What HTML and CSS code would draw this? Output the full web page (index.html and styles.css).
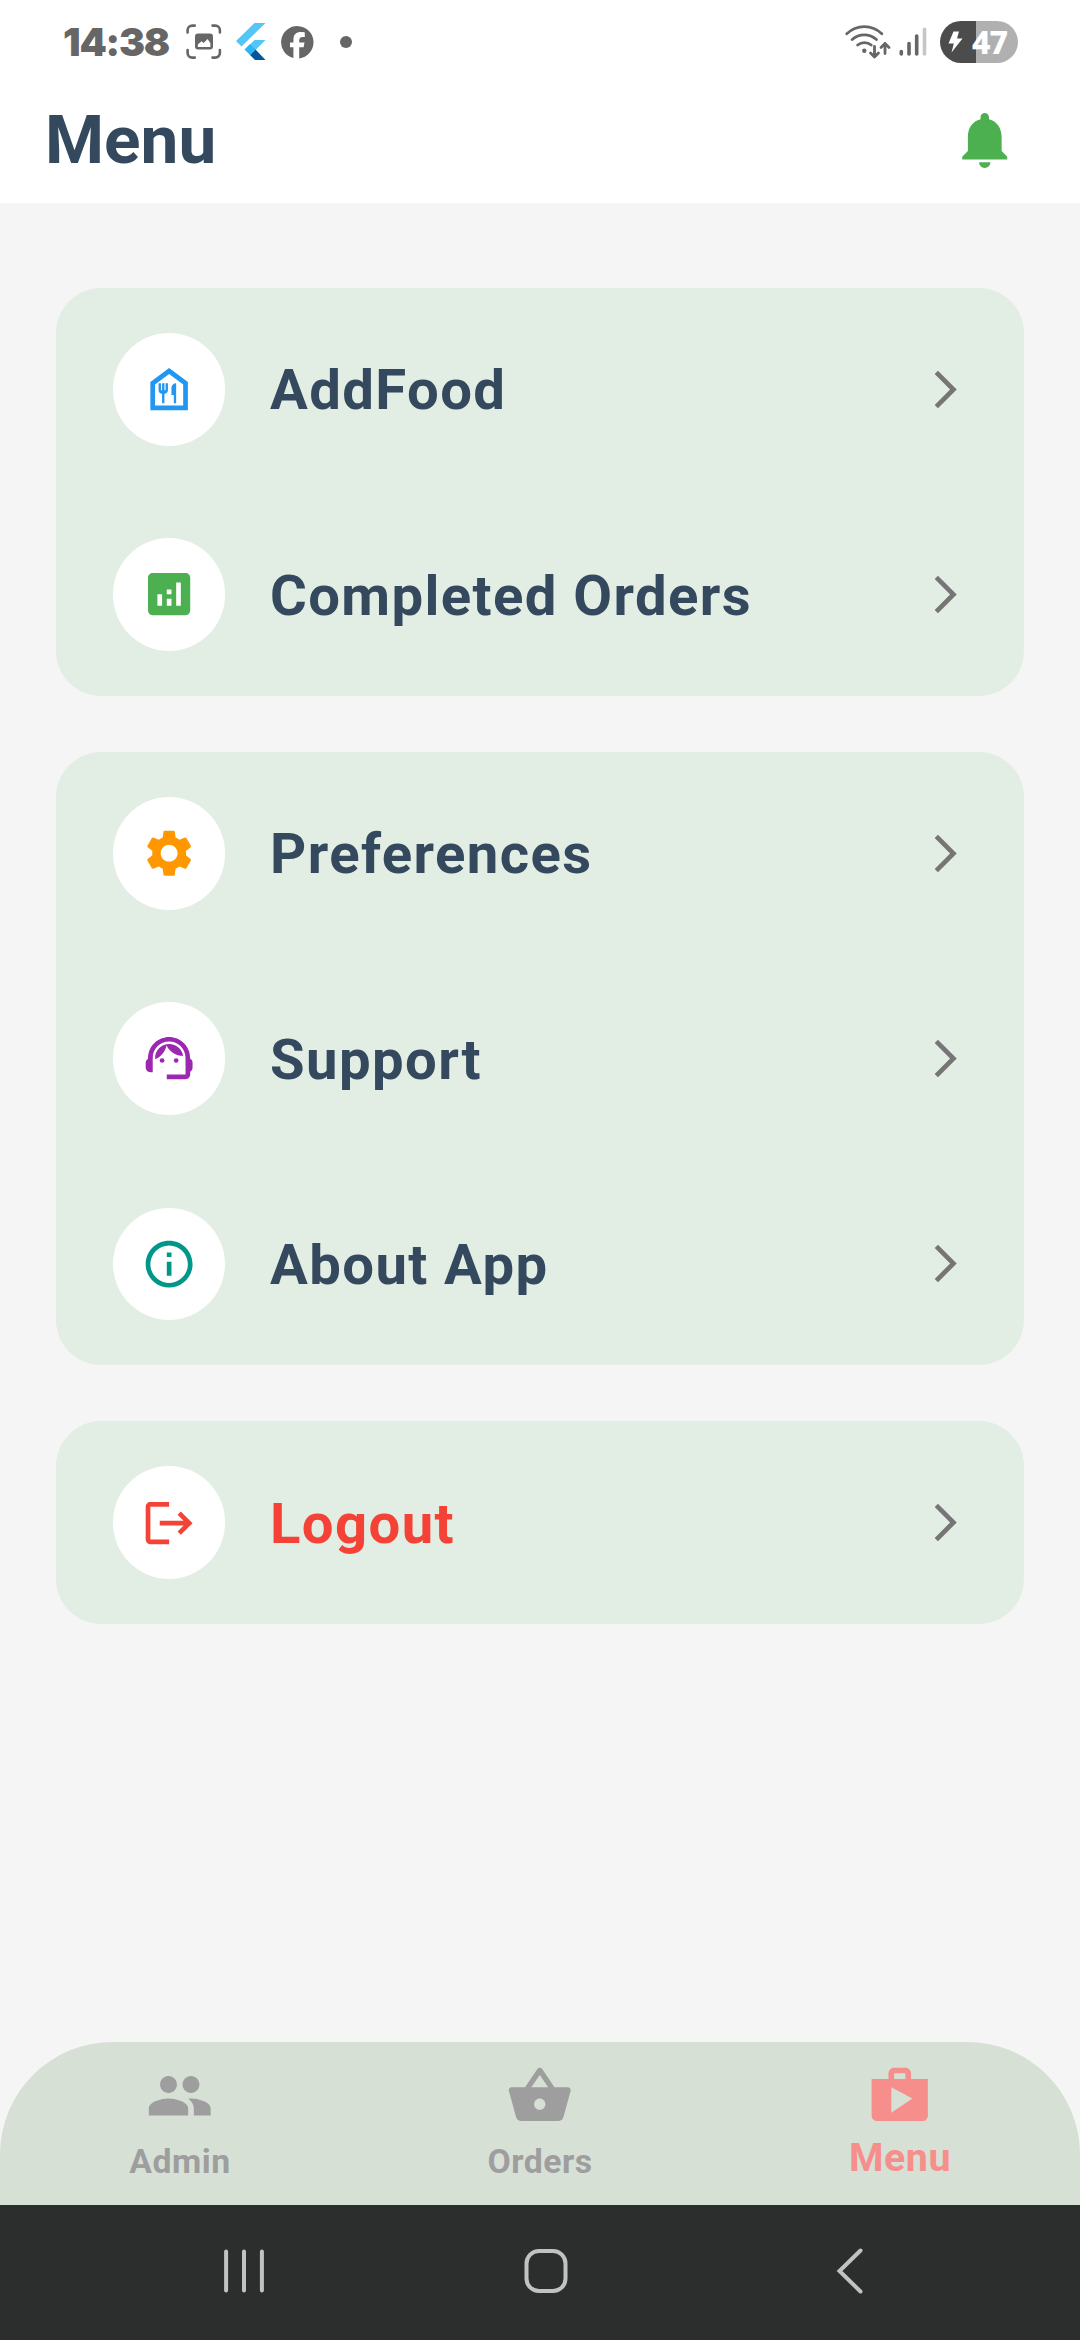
FILE: index.html
```html
<!DOCTYPE html>
<html lang="en">
<head>
<meta charset="utf-8">
<title>Menu</title>
<link rel="stylesheet" href="styles.css">
</head>
<body>
<svg class="defs" width="0" height="0" aria-hidden="true">
  <symbol id="chevron" viewBox="0 0 24 24"><path d="M6.23 20.23L8 22l10-10L8 2 6.23 3.77 14.46 12z"/></symbol>
</svg>
<div class="screen">
  <div class="status">
    <span class="time">14:38</span>
    <svg class="st-shot" width="36" height="36" viewBox="0 0 36 36" fill="none" stroke="#666" stroke-width="2.6" stroke-linecap="round">
      <path d="M1.6 8.5V6.2a4.6 4.6 0 0 1 4.6-4.6h2.6M26.5 1.6h2.8a4.6 4.6 0 0 1 4.6 4.6v2.3M33.900 26v3a4.600 4.600 0 0 1-4.600 4.600h-2.800M8.800 33.600H6.200A4.600 4.600 0 0 1 1.600 29v-3"/>
      <path fill="#666" stroke="none" fill-rule="evenodd" d="M12 9.500h12a3 3 0 0 1 3 3v10a3 3 0 0 1-3 3H12a3 3 0 0 1-3-3v-10a3 3 0 0 1 3-3zM11.800 23h12.600v-3.800l-2.800-4.200-4 4-2.100-1.800-3.700 3.300z"/>
    </svg>
    <svg class="st-flutter" width="30" height="38" viewBox="0 0 30 38">
      <path fill="#54c5f8" d="M18.500 0H29.500L5.500 23.500 0 18zM18.500 17H29.500L19.500 27 14 21.500z"/>
      <path fill="#29b6f6" d="M8.500 26.500l5.500-5.500 5.500 5.500-5.500 5.500z"/>
      <path fill="#01579b" d="M14 32l5.500-5.500 10 10.500H19z"/>
    </svg>
    <svg class="st-fb" width="33" height="33" viewBox="0 0 33 33">
      <path fill="#666" d="M32.500 16.300A16.200 16.200 0 1 0 12.400 32V21.300H9v-4.900h3.400v-2.200c0-5.500 2.500-8.100 7.900-8.100 1 0 2.800.2 3.500.4V11c-.4 0-1-.1-1.900-.1-2.600 0-3.700 1-3.700 3.600v1.900h5.300l-.9 4.900h-4.400v11.100A16.200 16.200 0 0 0 32.500 16.300z"/>
    </svg>
    <span class="st-dot"></span>
    <span class="spacer"></span>
    <svg class="st-wifi" width="46" height="36" viewBox="0 0 46 36" fill="none" stroke="#666" stroke-width="2.800" stroke-linecap="round" stroke-linejoin="round">
      <path d="M1.800 9.800a25 25 0 0 1 35 0M7.200 15.500a18 18 0 0 1 24.200 0M12.700 21a10.500 10.500 0 0 1 13.500 0"/>
      <circle cx="19.300" cy="26.700" r="2.200" fill="#666" stroke="none"/>
      <path d="M29.500 22.500v10M25.500 29l4 4 4-4M40 29.500v-10M36 23.500l4-4 4 4"/>
    </svg>
    <svg class="st-signal" width="28" height="30" viewBox="0 0 28 30" stroke="#666" stroke-width="3.600" stroke-linecap="round">
      <path d="M2.300 24.500v2.500M10 16.500v10.500M17.700 9v18"/><path stroke="#c6c6c6" d="M25.500 2.200V27"/>
    </svg>
    <div class="battery">
      <svg width="15" height="22" viewBox="0 0 15 22" fill="#fff"><path d="M5.500.5H11L9 7.500h5.500L3.500 21.500 5.800 12.500H.5z"/></svg>
      <span>47</span>
    </div>
  </div>
  <header class="appbar">
    <h1>Menu</h1>
    <svg class="bell" viewBox="0 0 24 24"><path d="M12 22c1.100 0 2-.9 2-2h-4c0 1.100.89 2 2 2zm6-6v-5c0-3.070-1.640-5.640-4.500-6.320V4c0-.83-.67-1.500-1.500-1.500s-1.500.67-1.500 1.500v.68C7.630 5.360 6 7.920 6 11v5l-2 2v1h16v-1l-2-2z"/></svg>
  </header>
  <main class="content">
    <section class="card">
      <div class="row">
        <span class="disc blue"><svg viewBox="0 0 24 24"><path d="M12 5.500l6 4.500v9H6v-9l6-4.500M12 3L4 9v12h16V9l-8-6zm-.5 6.500v3c0 .83-.67 1.500-1.500 1.500v4H9v-4c-.83 0-1.500-.67-1.500-1.500v-3h1v3H9v-3h1v3h.5v-3h1zm1.500 2v3h1V18h1V9.500c-1.100 0-2 .9-2 2z"/></svg></span>
        <span class="label">AddFood</span>
        <svg class="chev"><use href="#chevron"/></svg>
      </div>
      <div class="row">
        <span class="disc green"><svg viewBox="0 0 24 24"><path d="M19 3H5c-1.100 0-2 .9-2 2v14c0 1.100.9 2 2 2h14c1.100 0 2-.9 2-2V5c0-1.100-.9-2-2-2zM9 17H7v-5h2v5zm4 0h-2v-3h2v3zm0-5h-2v-2h2v2zm4 5h-2V7h2v10z"/></svg></span>
        <span class="label">Completed Orders</span>
        <svg class="chev"><use href="#chevron"/></svg>
      </div>
    </section>
    <section class="card">
      <div class="row">
        <span class="disc orange"><svg viewBox="0 0 24 24"><path d="M19.14,12.94c0.04-0.3,0.06-0.61,0.06-0.94c0-0.32-0.02-0.64-0.07-0.94l2.03-1.58c0.18-0.14,0.23-0.41,0.12-0.61l-1.92-3.32c-0.12-0.22-0.37-0.29-0.59-0.22l-2.39,0.96c-0.5-0.38-1.03-0.7-1.62-0.94L14.4,2.81c-0.04-0.24-0.24-0.41-0.48-0.41h-3.84c-0.24,0-0.43,0.17-0.47,0.41L9.25,5.35C8.66,5.59,8.12,5.92,7.63,6.29L5.24,5.33c-0.22-0.08-0.47,0-0.59,0.22L2.74,8.87C2.62,9.08,2.66,9.34,2.86,9.48l2.03,1.58C4.84,11.36,4.8,11.69,4.8,12s0.02,0.64,0.07,0.94l-2.03,1.58c-0.18,0.14-0.23,0.41-0.12,0.61l1.92,3.32c0.12,0.22,0.37,0.29,0.59,0.22l2.39-0.96c0.5,0.38,1.03,0.7,1.62,0.94l0.36,2.54c0.05,0.24,0.24,0.41,0.48,0.41h3.84c0.24,0,0.44-0.17,0.47-0.41l0.36-2.54c0.59-0.24,1.13-0.56,1.62-0.94l2.39,0.96c0.22,0.08,0.47,0,0.59-0.22l1.92-3.32c0.12-0.22,0.07-0.47-0.12-0.61L19.14,12.94z M12,15.6c-1.98,0-3.6-1.62-3.6-3.6s1.62-3.6,3.6-3.6s3.6,1.62,3.6,3.6S13.98,15.6,12,15.6z"/></svg></span>
        <span class="label">Preferences</span>
        <svg class="chev"><use href="#chevron"/></svg>
      </div>
      <div class="row">
        <span class="disc purple"><svg viewBox="0 0 24 24"><path d="M21,12.22C21,6.73,16.74,3,12,3c-4.69,0-9,3.65-9,9.28C2.4,12.62,2,13.26,2,14v2c0,1.1,0.9,2,2,2h1v-6.1c0-3.87,3.13-7,7-7s7,3.13,7,7V19h-8v2h8c1.1,0,2-0.9,2-2v-1.22c0.59-0.31,1-0.92,1-1.64v-2.3C22,13.14,21.59,12.53,21,12.22z"/><circle cx="9" cy="13" r="1"/><circle cx="15" cy="13" r="1"/><path d="M18,11.03C17.52,8.18,15.04,6,12.05,6c-3.03,0-6.29,2.51-6.03,6.45c2.47-1.01,4.33-3.21,4.86-5.89C12.19,9.19,14.88,11,18,11.03z"/></svg></span>
        <span class="label">Support</span>
        <svg class="chev"><use href="#chevron"/></svg>
      </div>
      <div class="row">
        <span class="disc teal"><svg viewBox="0 0 24 24"><path d="M11 7h2v2h-2zm0 4h2v6h-2zm1-9C6.480 2 2 6.480 2 12s4.480 10 10 10 10-4.480 10-10S17.520 2 12 2zm0 18c-4.410 0-8-3.590-8-8s3.590-8 8-8 8 3.590 8 8-3.590 8-8 8z"/></svg></span>
        <span class="label">About App</span>
        <svg class="chev"><use href="#chevron"/></svg>
      </div>
    </section>
    <section class="card">
      <div class="row">
        <span class="disc red"><svg viewBox="0 0 24 24"><path d="M17 7l-1.410 1.410L18.170 11H8v2h10.170l-2.580 2.580L17 17l5-5zM4 5h8V3H4c-1.100 0-2 .9-2 2v14c0 1.100.9 2 2 2h8v-2H4V5z"/></svg></span>
        <span class="label danger">Logout</span>
        <svg class="chev"><use href="#chevron"/></svg>
      </div>
    </section>
  </main>
  <nav class="tabs">
    <div class="tab">
      <svg viewBox="0 0 24 24"><path d="M16 11c1.660 0 2.990-1.340 2.990-3S17.660 5 16 5c-1.660 0-3 1.340-3 3s1.340 3 3 3zm-8 0c1.660 0 2.990-1.340 2.990-3S9.660 5 8 5C6.340 5 5 6.340 5 8s1.340 3 3 3zm0 2c-2.330 0-7 1.170-7 3.500V19h14v-2.500c0-2.330-4.670-3.500-7-3.500zm8 0c-.29 0-.62.02-.97.05 1.160.84 1.970 1.970 1.970 3.450V19h6v-2.500c0-2.330-4.670-3.500-7-3.500z"/></svg>
      <span>Admin</span>
    </div>
    <div class="tab">
      <svg viewBox="0 0 24 24"><path d="M17.210 9l-4.380-6.560c-.19-.28-.51-.42-.83-.42-.32 0-.64.14-.83.43L6.790 9H2c-.55 0-1 .45-1 1 0 .09.01.18.04.27l2.540 9.270c.23.84 1 1.460 1.920 1.460h13c.92 0 1.690-.62 1.930-1.460l2.540-9.270L23 10c0-.55-.45-1-1-1h-4.790zM9 9l3-4.400L15 9H9zm3 8c-1.100 0-2-.9-2-2s.9-2 2-2 2 .9 2 2-.9 2-2 2z"/></svg>
      <span>Orders</span>
    </div>
    <div class="tab active">
      <svg viewBox="0 0 24 24"><path d="M16 6V4c0-1.110-.89-2-2-2h-4c-1.110 0-2 .89-2 2v2H2v13c0 1.110.89 2 2 2h16c1.110 0 2-.89 2-2V6h-6zm-6-2h4v2h-4V4zM9 18V9l7.500 4L9 18z"/></svg>
      <span>Menu</span>
    </div>
  </nav>
  <div class="sysbar">
    <svg class="sys-recent" width="46" height="46" viewBox="0 0 46 46"><path d="M5.100 3.500v39M23 3.500v39M40.900 3.500v39"/></svg>
    <svg class="sys-home" width="46" height="46" viewBox="0 0 46 46"><rect x="3.500" y="3" width="39" height="40" rx="12.500"/></svg>
    <svg class="sys-back" width="30" height="48" viewBox="0 0 30 48"><path d="M25.500 3.500L4.500 24l21 20.500"/></svg>
  </div>
</div>
</body>
</html>
```
FILE: styles.css
```css
* { box-sizing: border-box; }
body { margin: 0; font-family: Roboto, "Liberation Sans", sans-serif; background: #f5f5f5; }
.defs { display: block; }
svg { flex: none; display: block; }
.screen { width: 1080px; height: 2340px; display: flex; flex-direction: column; overflow: hidden; }

.status { height: 77px; padding: 7px 62px 0 63px; display: flex; align-items: center; background: #fff; color: #666; }
.time { width: 105px; padding-bottom: 1px; font: 900 39px/1 Inter, sans-serif; letter-spacing: -1.2px; white-space: nowrap; }
.st-shot { margin-left: 18px; }
.st-flutter { margin-left: 14px; }
.st-fb { margin-left: 15px; }
.st-dot { width: 12px; height: 12px; margin-left: 26px; border-radius: 50%; background: #666; }
.spacer { flex: 1; }
.st-signal { margin-left: 8px; }
.battery { width: 78px; height: 42px; margin-left: 13px; padding: 0 11px 0 8px; border-radius: 21px; display: flex; align-items: center; justify-content: space-between; background: linear-gradient(90deg, #4c4c4c 36px, #b0b0b0 36px); color: #fff; font: 800 32px/1 "Noto Sans", sans-serif; }
.battery span { letter-spacing: -1px; }

.appbar { height: 126px; padding: 0 61.75px 0 45px; display: flex; align-items: center; justify-content: space-between; background: #fff; }
.appbar h1 { margin: 0; font-size: 67.5px; font-weight: 700; line-height: 1; color: #34495e; }
.bell { width: 67.5px; height: 67.5px; fill: #4caf50; }

.content { flex: 1; padding: 85px 56.25px 0; display: flex; flex-direction: column; gap: 56.25px; }
.card { display: flex; flex-direction: column; gap: 2.8px; border-radius: 45px; background: #e2ede4; }
.row { height: 202.5px; padding: 0 56.25px; display: flex; align-items: center; }
.disc { width: 112.5px; height: 112.5px; border-radius: 50%; display: grid; place-items: center; background: #fff; }
.disc svg { width: 56.25px; height: 56.25px; }
.blue { fill: #2196f3; }
.green { fill: #4caf50; }
.orange { fill: #ff9800; }
.purple { fill: #9c27b0; }
.teal { fill: #009688; }
.red { fill: #f44336; }
.label { flex: 1; margin-left: 45px; padding-top: 2px; font-size: 56.25px; font-weight: 700; letter-spacing: 1.4px; color: #34495e; }
.danger { color: #f44336; }
.chev { width: 45px; height: 45px; fill: #757575; }

.tabs { height: 162.5px; display: grid; grid-template-columns: repeat(3, 1fr); border-radius: 112.5px 112.5px 0 0; background: #d6e0d5; }
.tab { padding-top: 19.5px; display: flex; flex-direction: column; align-items: center; color: #9e9e9e; font-size: 33.75px; font-weight: 700; letter-spacing: 0.5px; }
.tab svg { width: 67.5px; height: 67.5px; fill: currentColor; }
.tab span { line-height: 40px; margin-top: 13px; }
.active { color: #f68e8c; font-size: 39.4px; }
.tab.active span { margin-top: 9px; }

.sysbar { height: 135.5px; padding: 0 214px 2px 221px; display: flex; align-items: center; background: #2c2e2d; fill: none; stroke: #c2c2c2; stroke-width: 4; stroke-linecap: round; stroke-linejoin: miter; }
.sys-home { margin-left: 256px; }
.sys-back { margin-left: 266px; }
```
